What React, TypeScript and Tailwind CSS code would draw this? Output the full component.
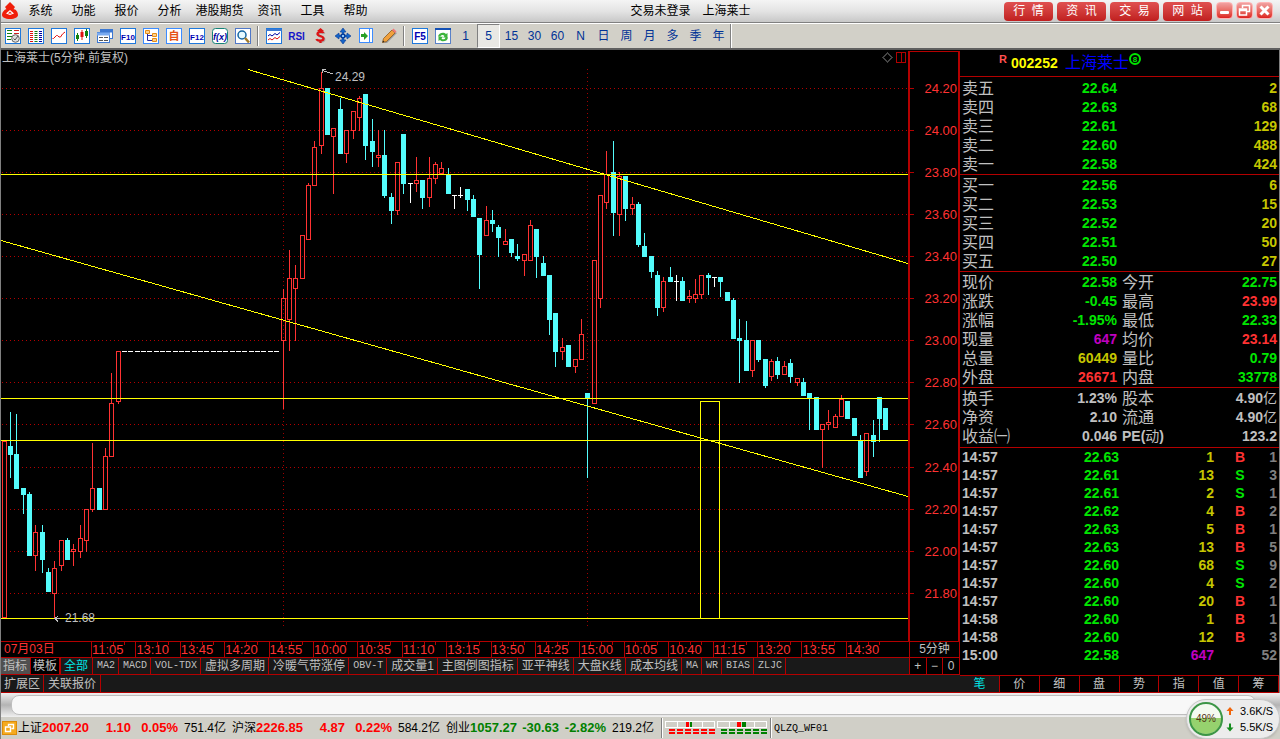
import type { ReactNode } from 'react'

type Candle = [x: number, high: number, top: number, bottom: number, low: number, kind: 'u' | 'd' | 'w']

// x, high, body top, body bottom, low, kind (u = up, d = down, w = flat)
const candles: Candle[] = [
  [4, 441, 441, 618, 618, 'u'], [10, 412, 446, 455, 478, 'd'], [16, 414, 454, 489, 489, 'd'], [23, 488, 488, 495, 514, 'd'],
  [29, 492, 494, 556, 556, 'd'], [35, 525, 532, 556, 571, 'u'], [42, 525, 532, 560, 573, 'd'], [48, 568, 572, 592, 592, 'd'],
  [54, 561, 568, 594, 618, 'u'], [61, 540, 540, 566, 571, 'u'], [67, 538, 540, 560, 560, 'd'], [73, 544, 549, 552, 566, 'u'],
  [80, 525, 538, 552, 558, 'u'], [86, 509, 509, 541, 552, 'u'], [92, 443, 488, 510, 512, 'u'], [99, 488, 488, 510, 510, 'd'],
  [105, 448, 456, 510, 510, 'u'], [111, 373, 403, 457, 457, 'u'], [118, 351, 351, 402, 404, 'u'],
  [283, 289, 298, 341, 409, 'u'], [289, 250, 278, 320, 351, 'u'], [295, 265, 278, 289, 341, 'u'], [302, 235, 235, 279, 279, 'u'],
  [308, 183, 185, 240, 240, 'u'], [314, 141, 147, 186, 186, 'u'], [321, 72, 88, 146, 154, 'u'], [327, 88, 88, 135, 135, 'd'],
  [333, 128, 128, 137, 194, 'u'], [340, 98, 109, 154, 154, 'd'], [346, 130, 130, 154, 163, 'u'], [353, 111, 111, 131, 139, 'u'],
  [359, 96, 98, 118, 131, 'u'], [365, 94, 94, 146, 160, 'd'], [372, 119, 141, 152, 167, 'd'], [378, 130, 155, 158, 167, 'u'],
  [384, 130, 155, 196, 198, 'd'], [391, 193, 197, 211, 224, 'd'], [397, 162, 162, 211, 215, 'u'], [403, 134, 134, 184, 194, 'd'],
  [410, 183, 183, 184, 203, 'w'], [416, 157, 180, 184, 192, 'u'], [422, 180, 180, 198, 209, 'd'], [429, 157, 178, 198, 207, 'u'],
  [435, 162, 164, 179, 184, 'u'], [441, 162, 168, 174, 174, 'u'], [448, 168, 174, 194, 194, 'd'], [454, 195, 195, 196, 209, 'w'],
  [460, 187, 195, 196, 198, 'w'], [467, 189, 189, 200, 211, 'd'], [473, 195, 199, 217, 217, 'd'], [479, 218, 218, 255, 289, 'd'],
  [486, 206, 220, 236, 236, 'u'], [492, 210, 220, 224, 232, 'd'], [498, 225, 227, 238, 257, 'd'], [505, 229, 241, 245, 245, 'u'],
  [511, 239, 239, 253, 257, 'd'], [517, 244, 256, 259, 261, 'd'], [524, 254, 254, 261, 276, 'u'], [530, 220, 225, 261, 261, 'u'],
  [536, 229, 229, 257, 278, 'd'], [543, 256, 263, 276, 276, 'd'], [549, 275, 275, 320, 335, 'd'], [555, 313, 313, 352, 367, 'd'],
  [562, 338, 347, 352, 360, 'u'], [568, 345, 345, 367, 367, 'd'], [575, 359, 359, 367, 373, 'u'], [581, 319, 334, 360, 360, 'u'],
  [587, 393, 393, 399, 478, 'd'], [594, 260, 260, 404, 404, 'u'], [600, 195, 195, 299, 308, 'u'], [606, 151, 174, 203, 209, 'u'],
  [613, 141, 172, 213, 236, 'd'], [619, 172, 176, 215, 236, 'u'], [625, 176, 176, 209, 221, 'd'], [632, 197, 204, 209, 215, 'u'],
  [638, 202, 204, 245, 247, 'd'], [644, 233, 246, 257, 257, 'd'], [651, 256, 256, 272, 278, 'd'], [657, 271, 275, 308, 316, 'd'],
  [663, 277, 281, 308, 312, 'u'], [670, 267, 277, 282, 282, 'd'], [676, 275, 281, 282, 301, 'w'], [682, 277, 281, 301, 301, 'd'],
  [689, 290, 296, 299, 303, 'u'], [695, 279, 294, 299, 303, 'u'], [701, 275, 275, 295, 299, 'u'], [708, 273, 275, 278, 295, 'd'],
  [714, 277, 277, 278, 287, 'w'], [720, 277, 277, 282, 297, 'd'], [727, 292, 292, 301, 301, 'd'], [733, 298, 300, 339, 339, 'd'],
  [739, 319, 338, 341, 383, 'd'], [746, 321, 340, 371, 371, 'd'], [752, 340, 340, 371, 377, 'u'], [758, 340, 340, 360, 362, 'd'],
  [765, 359, 359, 386, 388, 'd'], [771, 359, 361, 377, 381, 'u'], [777, 357, 361, 375, 379, 'd'], [784, 361, 366, 375, 375, 'u'],
  [790, 359, 363, 377, 383, 'd'], [797, 378, 378, 383, 386, 'u'], [803, 378, 382, 396, 396, 'd'], [809, 393, 393, 399, 430, 'd'],
  [816, 397, 397, 430, 430, 'd'], [822, 424, 424, 430, 468, 'u'], [828, 410, 422, 425, 430, 'u'], [835, 414, 416, 428, 428, 'u'],
  [841, 395, 399, 417, 417, 'u'], [847, 401, 401, 419, 419, 'd'], [854, 418, 418, 436, 436, 'd'], [860, 435, 440, 478, 478, 'd'],
  [866, 433, 433, 472, 476, 'u'], [873, 420, 435, 442, 457, 'd'], [879, 397, 397, 419, 442, 'd'], [885, 408, 408, 430, 430, 'd'],
]

// limit-up stretch: price does not move
const flat: Candle[] = Array.from({ length: 25 }, (_, i) => {
  const x = Math.floor(124.4 + i * 6.34)
  return [x, 351, 351, 352, 352, 'w']
})

const gridLines: [number, string][] = [
  [88, '24.20'], [130, '24.00'], [172, '23.80'], [214, '23.60'], [256, '23.40'], [298, '23.20'], [340, '23.00'],
  [382, '22.80'], [424, '22.60'], [467, '22.40'], [509, '22.20'], [551, '22.00'], [593, '21.80'],
]

const times = ['11:05', '13:10', '13:45', '14:20', '14:55', '10:00', '10:35', '11:10', '13:15', '13:50', '14:25', '15:00', '10:05', '10:40', '11:15', '13:20', '13:55', '14:30']

const menu = ['系统', '功能', '报价', '分析', '港股期货', '资讯', '工具', '帮助']
const redButtons = ['行  情', '资  讯', '交  易', '网  站']
const periods = ['1', '5', '15', '30', '60', 'N', '日', '周', '月', '多', '季', '年']
const indicators = ['MA2', 'MACD', 'VOL-TDX', '虚拟多周期', '冷暖气带涨停', 'OBV-T', '成交量1', '主图倒图指标', '亚平神线', '大盘K线', '成本均线', 'MA', 'WR', 'BIAS', 'ZLJC']
const sideTabs = ['笔', '价', '细', '盘', '势', '指', '值', '筹']

const sells = [['卖五', '22.64', '2'], ['卖四', '22.63', '68'], ['卖三', '22.61', '129'], ['卖二', '22.60', '488'], ['卖一', '22.58', '424']]
const buys = [['买一', '22.56', '6'], ['买二', '22.53', '15'], ['买三', '22.52', '20'], ['买四', '22.51', '50'], ['买五', '22.50', '27']]

const G = 'text-[#00e600]'
const R = 'text-[#ff3232]'
const Y = 'text-[#c6c600]'
const M = 'text-[#c000c0]'
const W = 'text-[#c0c0c0]'

const quote = [
  ['现价', '22.58', G, '今开', '22.75', G],
  ['涨跌', '-0.45', G, '最高', '23.99', R],
  ['涨幅', '-1.95%', G, '最低', '22.33', G],
  ['现量', '647', M, '均价', '23.14', R],
  ['总量', '60449', Y, '量比', '0.79', G],
  ['外盘', '26671', R, '内盘', '33778', G],
]
const finance = [
  ['换手', '1.23%', W, '股本', '4.90亿', W],
  ['净资', '2.10', W, '流通', '4.90亿', W],
  ['收益㈠', '0.046', W, 'PE(动)', '123.2', W],
]
const trades = [
  ['14:57', '22.63', '1', 'B', '1'],
  ['14:57', '22.61', '13', 'S', '3'],
  ['14:57', '22.61', '2', 'S', '1'],
  ['14:57', '22.62', '4', 'B', '2'],
  ['14:57', '22.63', '5', 'B', '1'],
  ['14:57', '22.63', '13', 'B', '5'],
  ['14:57', '22.60', '68', 'S', '9'],
  ['14:57', '22.60', '4', 'S', '2'],
  ['14:57', '22.60', '20', 'B', '1'],
  ['14:58', '22.60', '1', 'B', '1'],
  ['14:58', '22.60', '12', 'B', '3'],
  ['15:00', '22.58', '647', '', '52'],
]
const indices = [
  { name: '上证', value: '2007.20', change: '1.10', pct: '0.05%', amount: '751.4亿', color: 'text-[#f00]' },
  { name: '沪深', value: '2226.85', change: '4.87', pct: '0.22%', amount: '584.2亿', color: 'text-[#f00]' },
  { name: '创业', value: '1057.27', change: '-30.63', pct: '-2.82%', amount: '219.2亿', color: 'text-[#008000]' },
]

function Icon({ children }: { children: ReactNode }) {
  return <svg width="16" height="16" viewBox="0 0 16 16" fill="none">{children}</svg>
}

function Frame({ color = '#1e78dc' }: { color?: string }) {
  return <rect x="0.5" y="0.5" width="15" height="15" fill="#fff" stroke={color} />
}

function LetterIcon({ text, color = '#0000b4', frame }: { text: string; color?: string; frame?: string }) {
  return (
    <Icon>
      <Frame color={frame} />
      <text x="8" y="12" fontSize={text.length > 2 ? 8 : 10} fontWeight="700" fill={color} textAnchor="middle">{text}</text>
    </Icon>
  )
}

const leftTools: { label: string; icon: ReactNode }[] = [
  {
    label: '报价',
    icon: (
      <Icon>
        <Frame />
        <path d="M2 2.5h5M2 5.5h5M2 8.5h5M2 11.5h4" stroke="#108010" />
        <path d="M9 2.5h5M9 5.5h5" stroke="#d02020" />
        <circle cx="10.5" cy="10.5" r="3.8" fill="#ddd" stroke="#666" />
        <path d="m8.5 10.5 1.5 1.5 3-4" stroke="#555" />
      </Icon>
    ),
  },
  {
    label: '列表',
    icon: (
      <Icon>
        <Frame />
        <path d="M2 3.5h3M2 5.5h3M2 7.5h3M2 9.5h3M2 11.5h3M2 13.5h3" stroke="#e01010" />
        <path d="M6.500 3.500h3M6.500 5.500h3M6.500 7.500h3M6.500 9.500h3M6.500 11.500h3M6.500 13.500h3" stroke="#108010" />
        <path d="M11 3.500h3M11 5.500h3M11 7.500h3M11 9.500h3M11 11.500h3M11 13.500h3" stroke="#0000a0" />
      </Icon>
    ),
  },
  { label: '走势', icon: <Icon><Frame /><path d="M1.500 10.500h1l3-3h1l1.500 1.500h1.500l2-3 2.500-2" stroke="#e01010" /></Icon> },
  {
    label: 'K线',
    icon: (
      <Icon>
        <Frame />
        <path d="M3.500 5v8M12.500 1v9" stroke="#108010" />
        <path d="M8 2v10" stroke="#e01010" />
        <path d="M2 7h3v4H2zM11 3h3v5h-3z" fill="#108010" />
        <path d="M6.500 4h3v5h-3z" fill="#e01010" />
      </Icon>
    ),
  },
  {
    label: '窗口',
    icon: (
      <Icon>
        <rect x="3.500" y="1.500" width="12" height="9" fill="#fff" stroke="#3c78d2" />
        <path d="M3 3h13" stroke="#3c78d2" strokeWidth="3" />
        <rect x="0.500" y="4.500" width="12" height="10" fill="#fff" stroke="#3c78d2" />
        <path d="M0 6h13" stroke="#78aaf0" strokeWidth="3" />
        <path d="M2 9.500h4M7 9.500h4M2 12.500h4M7 12.500h4" stroke="#555" />
      </Icon>
    ),
  },
  { label: 'F10', icon: <LetterIcon text="F10" /> },
  {
    label: '板块',
    icon: (
      <Icon>
        <Frame color="#3c8cff" />
        <path d="M4.500 6v6.500H9M4.500 7.500H9" stroke="#2828a0" />
        <path d="M2.500 2.500h4v3h-4zM9.500 5.500h4v3h-4zM9.500 10.500h4v3h-4z" fill="#ffd28c" stroke="#e68c14" />
      </Icon>
    ),
  },
  { label: '自选', icon: <Icon><Frame color="#3c8cff" /><text x="8" y="12" fontSize="11" fontWeight="700" fill="#e65014" textAnchor="middle">自</text></Icon> },
  { label: 'F12', icon: <LetterIcon text="F12" /> },
  {
    label: '公式',
    icon: (
      <Icon>
        <rect x="0.500" y="0.500" width="15" height="15" rx="3" fill="#fff" stroke="#148278" />
        <text x="8" y="12" fontSize="9" fontStyle="italic" fontWeight="700" fill="#0000a0" textAnchor="middle">f(x)</text>
      </Icon>
    ),
  },
  {
    label: '查找',
    icon: (
      <Icon>
        <Frame color="#5078c8" />
        <circle cx="7" cy="7" r="4" fill="#e6faff" stroke="#1464a0" strokeWidth="1.500" />
        <path d="m10 10 4 4.500" stroke="#a07828" strokeWidth="2.500" />
      </Icon>
    ),
  },
]

const midTools: { label: string; icon: ReactNode }[] = [
  {
    label: '多图',
    icon: (
      <Icon>
        <Frame />
        <path d="M0 2h16" stroke="#3c78d2" strokeWidth="2" />
        <path d="m2 8 2-1.500 2 1.500 3-2.500 2 1.500 3-2.500" stroke="#0000a0" />
        <path d="m2 12 2-1.500 2 1.500 3-2.500 2 1.500 3-2.500" stroke="#e01010" />
      </Icon>
    ),
  },
  { label: 'RSI', icon: <span className="text-[10px] font-bold text-[#1414c8]">RSI</span> },
  {
    label: '资金',
    icon: (
      <Icon>
        <path d="M11.500 5C11 3.500 5.500 3 5.500 6c0 2.500 6 1.500 6 4.500 0 3-6.500 2.500-7 .5" stroke="#aaa" strokeWidth="2" transform="translate(1 1)" />
        <path d="M11.500 5C11 3.500 5.500 3 5.500 6c0 2.500 6 1.500 6 4.500 0 3-6.500 2.500-7 .5M8.500 1v3M8.500 12v3" stroke="#dc1414" strokeWidth="2.300" />
        <path d="M8.500 0 12 3H5z" fill="#dc1414" />
      </Icon>
    ),
  },
  {
    label: '移动',
    icon: (
      <Icon>
        <path d="m8 0 3 4H9v2H7V4H5zM8 16l-3-4h2v-2h2v2h2zM0 8l4-3v2h2v2H4v2zM16 8l-4 3V9h-2V7h2V5z" fill="#1464c8" stroke="#0a3c96" strokeWidth="0.600" />
        <rect x="6.500" y="6.500" width="3" height="3" fill="#8cc8ff" stroke="#0a3c96" />
      </Icon>
    ),
  },
  {
    label: '翻页',
    icon: (
      <Icon>
        <rect x="1.500" y="0.500" width="13" height="14" fill="#fff" stroke="#3c8cff" />
        <path d="M11.500 1v14" stroke="#3c8cff" />
        <path d="M3 6h3V4l4 4-4 4v-3H3z" fill="#28a028" />
      </Icon>
    ),
  },
  {
    label: '画线',
    icon: (
      <Icon>
        <path d="m3 15 11-11 2 1-10 10z" fill="#999" />
        <path d="m1.500 14.500 1-4L11 2l3 3-8.500 8.500z" fill="#f0a03c" stroke="#8c5a1e" strokeWidth="0.800" />
        <path d="m11 2 1.500-1.500 3 3L14 5z" fill="#f07878" />
        <path d="m1.500 14.500.5-2 1.500 1.500z" fill="#222" />
      </Icon>
    ),
  },
]

const rightTools: { label: string; icon: ReactNode }[] = [
  { label: 'F5', icon: <LetterIcon text="F5" /> },
  {
    label: '刷新',
    icon: (
      <Icon>
        <Frame color="#5a82c8" />
        <path d="M0 1h16" stroke="#1450b4" strokeWidth="2" />
        <path d="M3 8.500c.5-4 6-5 8-2.500l1.500-1v4.500H8L9.500 8C8 6.500 6 7 5.500 8.500zM13 9.500c-.5 4-6 5-8 2.500l-1.500 1V8.800H8L6.500 10.500c1.500 1.500 3.500 1 4-1z" fill="#3cb43c" />
      </Icon>
    ),
  },
]

function ToolButton({ label, children }: { label: string; children: ReactNode }) {
  return (
    <button aria-label={label} className="flex h-[22px] w-[23px] shrink-0 items-center justify-center">
      {children}
    </button>
  )
}

function Separator() {
  return (
    <span className="flex h-5 w-2 shrink-0 justify-center">
      <span className="w-0.5 border-l border-[#808080] bg-white" />
    </span>
  )
}

function CandleShape({ c }: { c: Candle }) {
  const [x, high, top, bottom, low, kind] = c
  if (kind === 'u') {
    return (
      <g fill="#ff3232">
        <rect x={x} y={high} width="1" height={top - high} />
        <rect x={x} y={bottom} width="1" height={low - bottom} />
        <rect x={x - 1.5} y={top + 0.5} width="4" height={Math.max(bottom - top - 1, 1)} fill="none" stroke="#ff3232" />
      </g>
    )
  }
  return (
    <g fill={kind === 'd' ? '#54fcfc' : '#fff'}>
      <rect x={x} y={high} width="1" height={low - high} />
      <rect x={x - 2} y={top} width="5" height={bottom - top} />
    </g>
  )
}

function Chart() {
  return (
    <svg className="block min-h-[591px] w-full flex-1 bg-black" viewBox="1 50 959 591" preserveAspectRatio="none" shapeRendering="crispEdges">
      {gridLines.map(([y]) => (
        <path key={y} d={`M2 ${y}.5H908`} stroke="#b40000" strokeDasharray="1 3" />
      ))}
      <path d="M283.500 69V627M587.500 69V627" stroke="#a00000" strokeDasharray="1 3" />
      {[...candles, ...flat].map((c) => (
        <CandleShape key={c[0]} c={c} />
      ))}
      <g stroke="#ff0" fill="none">
        <path d="M1 174.500H908M1 398.500H908M1 440.500H908M1 618.500H908" />
        <path d="M248 69.500 908 263.500M1 240.500 908 496.500" />
        <path d="M700.500 618V401.500H719.500V618" />
      </g>
      <g stroke="#c0c0c0" fill="none">
        <path d="M333 74 322 70.500M326 69h-4v4M60 618.500h-5M58 616l-3 2.500 3 3" />
      </g>
      <g fontSize="12" fill="#c0c0c0">
        <text x="2" y="62">上海莱士(5分钟.前复权)</text>
        <text x="335" y="81">24.29</text>
        <text x="65" y="622">21.68</text>
      </g>
      <path d="m887.500 53 4.500 4.500-4.500 4.500-4.500-4.500z" stroke="#444" fill="none" />
      <path d="M896.500 52.500h9v10h-9zM901.500 52.500v10" stroke="#b40000" fill="none" />
      <path d="M909 51V641M959 51V641" stroke="#b40000" strokeWidth="2" />
      <path d="M908 51.500H960" stroke="#b40000" />
      {gridLines.map(([y, label]) => (
        <g key={label}>
          <path d={`M910 ${y}.5h4`} stroke="#b40000" />
          <text x="957" y={y + 5} fontSize="13" fill="#ff3232" textAnchor="end">{label}</text>
        </g>
      ))}
    </svg>
  )
}

function TimeAxis() {
  return (
    <div className="flex h-4 border-t border-[#b40000] text-[13px] leading-[15px] text-[#ff3232]">
      <div className="grid min-w-0 flex-1 grid-cols-[900fr_repeat(17,444fr)_632fr] overflow-hidden">
        <span className="pl-[3px] text-[12px]">07月03日</span>
        {times.map((t) => (
          <span key={t} className="relative border-l border-[#b40000] whitespace-nowrap">
            {t}
            <span className="absolute inset-x-0 top-0 flex h-[3px] w-11">
              <i className="w-[11px] border-r border-[#b40000]" />
              <i className="w-[11px] border-r border-[#b40000]" />
              <i className="w-[11px] border-r border-[#b40000]" />
            </span>
          </span>
        ))}
      </div>
      <span className="w-[51px] border-x border-[#b40000] text-center text-[12px] text-[#c0c0c0]">5分钟</span>
    </div>
  )
}

function IndicatorTabs() {
  return (
    <>
      <div className="flex h-[17px] border-t border-[#b40000] bg-[#191919] text-[12px] leading-4 text-[#c0c0c0]">
        <div className="flex min-w-0 flex-1 overflow-hidden">
          <button className="border-r border-[#b40000] bg-[#505050] pr-[3px] pl-0.5">指标</button>
          <button className="border-r border-[#b40000] bg-black px-0.5">模板</button>
          <button className="border-x border-[#b40000] pr-1 pl-[3px] text-[#00e6e6]">全部</button>
          {indicators.map((name) => (
            <button
              key={name}
              className={`shrink-0 border-r border-[#b40000] pr-[3px] pl-1 whitespace-nowrap ${/^[\w-]+$/.test(name) ? "font-['Liberation_Mono',monospace] text-[10px]" : ''}`}
            >
              {name}
            </button>
          ))}
        </div>
        <div className="flex w-[51px] border-r border-[#b40000] bg-black">
          {['+', '−', '0'].map((s) => (
            <button key={s} className="flex-1 border-l border-[#b40000]">{s}</button>
          ))}
        </div>
      </div>
      <div className="flex h-[19px] border-y border-[#b40000] bg-[#191919] text-[12px] leading-4 text-[#c0c0c0]">
        <button className="border-r border-[#b40000] px-[3px]">扩展区</button>
        <button className="border-r border-[#b40000] px-1">关联报价</button>
      </div>
    </>
  )
}

function BookTable({ rows }: { rows: string[][] }) {
  return (
    <table className="w-full table-fixed">
      <tbody>
        {rows.map(([label, price, amount]) => (
          <tr key={label} className="h-[19px] text-[14px] leading-[19px]">
            <td className="w-[62px] pl-0.5 text-[16px] text-[#c0c0c0]">{label}</td>
            <td className="w-[95px] text-right font-bold text-[#00e600]">{price}</td>
            <td className="pr-0.5 text-right font-bold text-[#c6c600]">{amount}</td>
          </tr>
        ))}
      </tbody>
    </table>
  )
}

function Value({ text }: { text: string }) {
  if (!text.endsWith('亿')) return <>{text}</>
  return <>{text.slice(0, -1)}<span className="font-normal">亿</span></>
}

function QuoteTable({ rows }: { rows: string[][] }) {
  return (
    <table className="w-full table-fixed">
      <tbody>
        {rows.map(([label, value, color, label2, value2, color2]) => (
          <tr key={label} className="h-[19px] text-[14px] leading-[19px]">
            <td className="w-[62px] pl-0.5 text-[16px] whitespace-nowrap text-[#c0c0c0]">{label}</td>
            <td className={`w-[95px] text-right font-bold ${color}`}>{value}</td>
            <td className={`w-[70px] pl-[5px] whitespace-nowrap text-[#c0c0c0] ${label2.startsWith('PE') ? 'font-bold' : 'text-[16px]'}`}>
              {label2 === 'PE(动)' ? <>PE(<span className="font-normal">动</span>)</> : label2}
            </td>
            <td className={`pr-0.5 text-right font-bold ${color2}`}><Value text={value2} /></td>
          </tr>
        ))}
      </tbody>
    </table>
  )
}

function TradeTable() {
  return (
    <table className="w-full table-fixed text-[14px] leading-[18px] font-bold">
      <tbody>
        {trades.map(([time, price, volume, side, count], i) => (
          <tr key={i} className="h-[18px]">
            <td className="w-[80px] pl-0.5 text-[#c0c0c0]">{time}</td>
            <td className="w-[79px] text-right text-[#00e600]">{price}</td>
            <td className={`w-[95px] text-right ${side ? 'text-[#c6c600]' : 'text-[#c000c0]'}`}>{volume}</td>
            <td className={`w-[40px] pl-3 text-center ${side === 'B' ? 'text-[#ff3232]' : 'text-[#00e600]'}`}>{side}</td>
            <td className="pr-0.5 text-right text-[#808080]">{count}</td>
          </tr>
        ))}
      </tbody>
    </table>
  )
}

function SidePanel() {
  return (
    <aside className="flex w-80 shrink-0 flex-col border-r border-[#808080] bg-black">
      <div className="flex h-[26px] items-center pl-[39px] leading-5">
        <span className="mb-2 w-3 text-[11px] font-bold text-[#ff5050]">R</span>
        <span className="w-[54px] text-[14px] font-bold text-[#ff0]">002252</span>
        <span className="text-[16px] text-[#0000ff]">上海莱士</span>
        <svg className="mb-2" width="12" height="12" viewBox="0 0 12 12">
          <circle cx="6" cy="6" r="5" fill="none" stroke="#00e600" strokeWidth="2" />
          <text x="6" y="9" fontSize="8" fontWeight="700" fill="#00e600" textAnchor="middle">8</text>
        </svg>
      </div>
      <div className="border-t border-[#b40000] pt-0.5">
        <BookTable rows={sells} />
      </div>
      <div className="border-t border-[#b40000] pt-px">
        <BookTable rows={buys} />
      </div>
      <div className="border-t border-[#b40000] pt-px">
        <QuoteTable rows={quote} />
      </div>
      <div className="border-t border-[#b40000] py-px">
        <QuoteTable rows={finance} />
      </div>
      <div className="border-t border-[#b40000]">
        <TradeTable />
      </div>
      <div className="mt-auto flex h-[18px] border-y border-[#b40000] text-[12px] leading-4">
        {sideTabs.map((t, i) => (
          <button key={t} className={`flex-1 border-r border-[#b40000] ${i === 0 ? 'bg-[#191919] text-[#00e6e6]' : 'text-[#c0c0c0]'}`}>{t}</button>
        ))}
      </div>
    </aside>
  )
}

function MenuBar() {
  return (
    <header className="flex h-[23px] items-center justify-between border-b border-[#808080] bg-linear-to-b from-[#f4f4f4] via-[#e4e4e4] to-[#c8c8c8] text-[12px] text-black">
      <nav className="flex items-center">
        <svg width="18" height="20" viewBox="0 0 18 20">
          <path d="m9 1 5 5-2 3H6L4 6z" fill="#f01e0a" />
          <path d="M1 14c0-3 3-6 5-6l3-2 3 2c3 0 5 3 5 6 0 2-3 4-8 4s-8-2-8-4z" fill="#f01e0a" />
          <path d="m5 12.500 4-3.500 4 3.500-4 1.500z" fill="#fff" />
          <path d="m7 12.500 2-2 2 2z" fill="#f01e0a" />
        </svg>
        {menu.map((m) => (
          <button key={m} className={m.length > 2 ? 'w-[57px]' : 'w-[43px]'}>{m}</button>
        ))}
      </nav>
      <div className="flex gap-3">
        <span>交易未登录</span>
        <span>上海莱士</span>
      </div>
      <div className="flex items-center gap-1 pr-[7px]">
        {redButtons.map((b) => (
          <button key={b} className="h-[19px] w-[49px] rounded bg-linear-to-b from-[#e05050] to-[#c01e1e] whitespace-pre text-white">{b}</button>
        ))}
        <div className="mb-0.5 flex gap-[3px]">
          <button aria-label="最小化" className="h-[17px] w-[17px] rounded-sm border border-[#ffb4b4] bg-linear-to-b from-[#f0a0a0] to-[#dc1e1e]">
            <svg width="15" height="15" viewBox="0 0 15 15"><rect x="3" y="8" width="9" height="3" rx="1" fill="#fff" /></svg>
          </button>
          <button aria-label="还原" className="h-[17px] w-[17px] rounded-sm border border-[#ffb4b4] bg-linear-to-b from-[#f0a0a0] to-[#dc1e1e]">
            <svg width="15" height="15" viewBox="0 0 15 15" fill="none" stroke="#fff" strokeWidth="1.500"><path d="M5.500 5V2.500h7v6H10M2.500 6h7v6h-7zM2.500 7.500h7" /></svg>
          </button>
          <button aria-label="关闭" className="h-[17px] w-[17px] rounded-sm border border-[#ffb4b4] bg-linear-to-b from-[#f0a0a0] to-[#dc1e1e]">
            <svg width="15" height="15" viewBox="0 0 15 15"><path d="m3.500 3.500 8 8m0-8-8 8" stroke="#fff" strokeWidth="3" /></svg>
          </button>
        </div>
      </div>
    </header>
  )
}

function Toolbar() {
  return (
    <div className="flex h-[27px] items-center overflow-hidden border-t border-b-2 border-t-white border-b-[#606060] bg-[#d2d0c8] text-[12px] text-[#003296]">
      {leftTools.map((t) => <ToolButton key={t.label} label={t.label}>{t.icon}</ToolButton>)}
      <Separator />
      {midTools.map((t) => <ToolButton key={t.label} label={t.label}>{t.icon}</ToolButton>)}
      <Separator />
      {rightTools.map((t) => <ToolButton key={t.label} label={t.label}>{t.icon}</ToolButton>)}
      {periods.map((p) => (
        <button
          key={p}
          className={`h-6 w-[23px] shrink-0 ${p === '5' ? 'border border-t-[#808080] border-r-white border-b-white border-l-[#808080] bg-[#e9e8e4]' : ''}`}
        >
          {p}
        </button>
      ))}
      <span className="h-6 w-0.5 border-l border-[#808080] bg-white" />
    </div>
  )
}

function Meter({ color, redWidth, greenWidth }: { color: string; redWidth: number; greenWidth: number }) {
  return (
    <svg className="mr-px shrink-0" width="51" height="14" viewBox="0 0 51 14" shapeRendering="crispEdges">
      <rect x="0.500" y="0.500" width="49" height="6" fill="#d0cfc7" stroke="#fff" />
      <path d="M12.500 1v5M25.500 1v5M37.500 1v5" stroke="#fff" />
      <rect x={24 - redWidth} y="1" width={redWidth} height="5" fill="#f00" />
      <rect x="25" y="1" width={greenWidth} height="5" fill="#008000" />
      <path d="M4 9h47M4 12h47" stroke={color} strokeWidth="2" strokeDasharray="6 2" />
    </svg>
  )
}

function StatusBar() {
  return (
    <footer className="flex h-[22px] items-center overflow-hidden bg-[#d0cfc7] text-[12px] whitespace-nowrap text-black">
      <svg className="mx-px shrink-0" width="15" height="14" viewBox="0 0 15 14">
        <rect x="0.500" y="0.500" width="14" height="13" fill="#f5aa1e" stroke="#dc8c0a" />
        <path d="M6.500 5V3.500h5v4H9.500M3.500 6h5v4.500h-5z" fill="none" stroke="#fff" strokeWidth="1.400" />
      </svg>
      {indices.map((x) => (
        <div key={x.name} className="flex w-[214px] shrink-0 items-center">
          <span className="w-6">{x.name}</span>
          <span className={`w-[47px] text-[13px] font-bold ${x.color}`}>{x.value}</span>
          <span className={`w-[42px] text-right text-[13px] font-bold ${x.color}`}>{x.change}</span>
          <span className={`w-[47px] text-right text-[13px] font-bold ${x.color}`}>{x.pct}</span>
          <span className="w-12 text-right">{x.amount}</span>
        </div>
      ))}
      <span className="mr-0.5 ml-px h-5 w-0.5 shrink-0 border-l border-[#808080] bg-white" />
      <Meter color="#f00" redWidth={3} greenWidth={2} />
      <Meter color="#008000" redWidth={4} greenWidth={4} />
      <span className="mr-0.5 ml-px h-5 w-0.5 shrink-0 border-l border-[#808080] bg-white" />
      <span className="font-['Liberation_Mono',monospace] text-[10px]">QLZQ_WF01</span>
    </footer>
  )
}

function SpeedBadge() {
  return (
    <div className="absolute right-0 bottom-0 flex h-10 w-[94px] items-center rounded-full border border-[#c8c8c8] bg-[#ececec] pl-px text-[11px] leading-4 text-black shadow">
      <svg className="shrink-0" width="36" height="36" viewBox="0 0 36 36">
        <circle cx="18" cy="18" r="16" fill="#f4faf0" />
        <path d="M2 17h32a16 16 0 0 1-32 0z" fill="#96d26e" />
        <circle cx="18" cy="18" r="16" fill="none" stroke="#3c9646" strokeWidth="2" />
        <text x="18" y="21" fontSize="10" fill="#503214" textAnchor="middle">49%</text>
      </svg>
      <div className="ml-0.5">
        <div className="flex items-center gap-1.5">
          <svg width="8" height="9" viewBox="0 0 8 9"><path d="m4 0 3.500 4H5v4H3V4H.5z" fill="#f0640a" /></svg>
          3.6K/S
        </div>
        <div className="flex items-center gap-1.5">
          <svg width="8" height="9" viewBox="0 0 8 9"><path d="M4 8.500.5 4.500H3v-4h2v4h2.500z" fill="#148c1e" /></svg>
          5.5K/S
        </div>
      </div>
    </div>
  )
}

export default function App() {
  return (
    <div className="relative flex min-h-screen flex-col border-l border-[#808080] bg-black font-['Liberation_Sans','Noto_Sans_CJK_SC',sans-serif]">
      <MenuBar />
      <Toolbar />
      <main className="flex flex-1">
        <section className="flex min-w-0 flex-1 flex-col">
          <Chart />
          <TimeAxis />
          <IndicatorTabs />
        </section>
        <SidePanel />
      </main>
      <div className="flex h-6 items-center bg-linear-to-b from-[#f0f0f0] via-[#b4b4b4] to-[#f0f0f0] pr-6 pl-2.5">
        <div className="h-5 flex-1 rounded-lg border border-[#bebebe] bg-[#f8f8f8]" />
      </div>
      <StatusBar />
      <SpeedBadge />
    </div>
  )
}
